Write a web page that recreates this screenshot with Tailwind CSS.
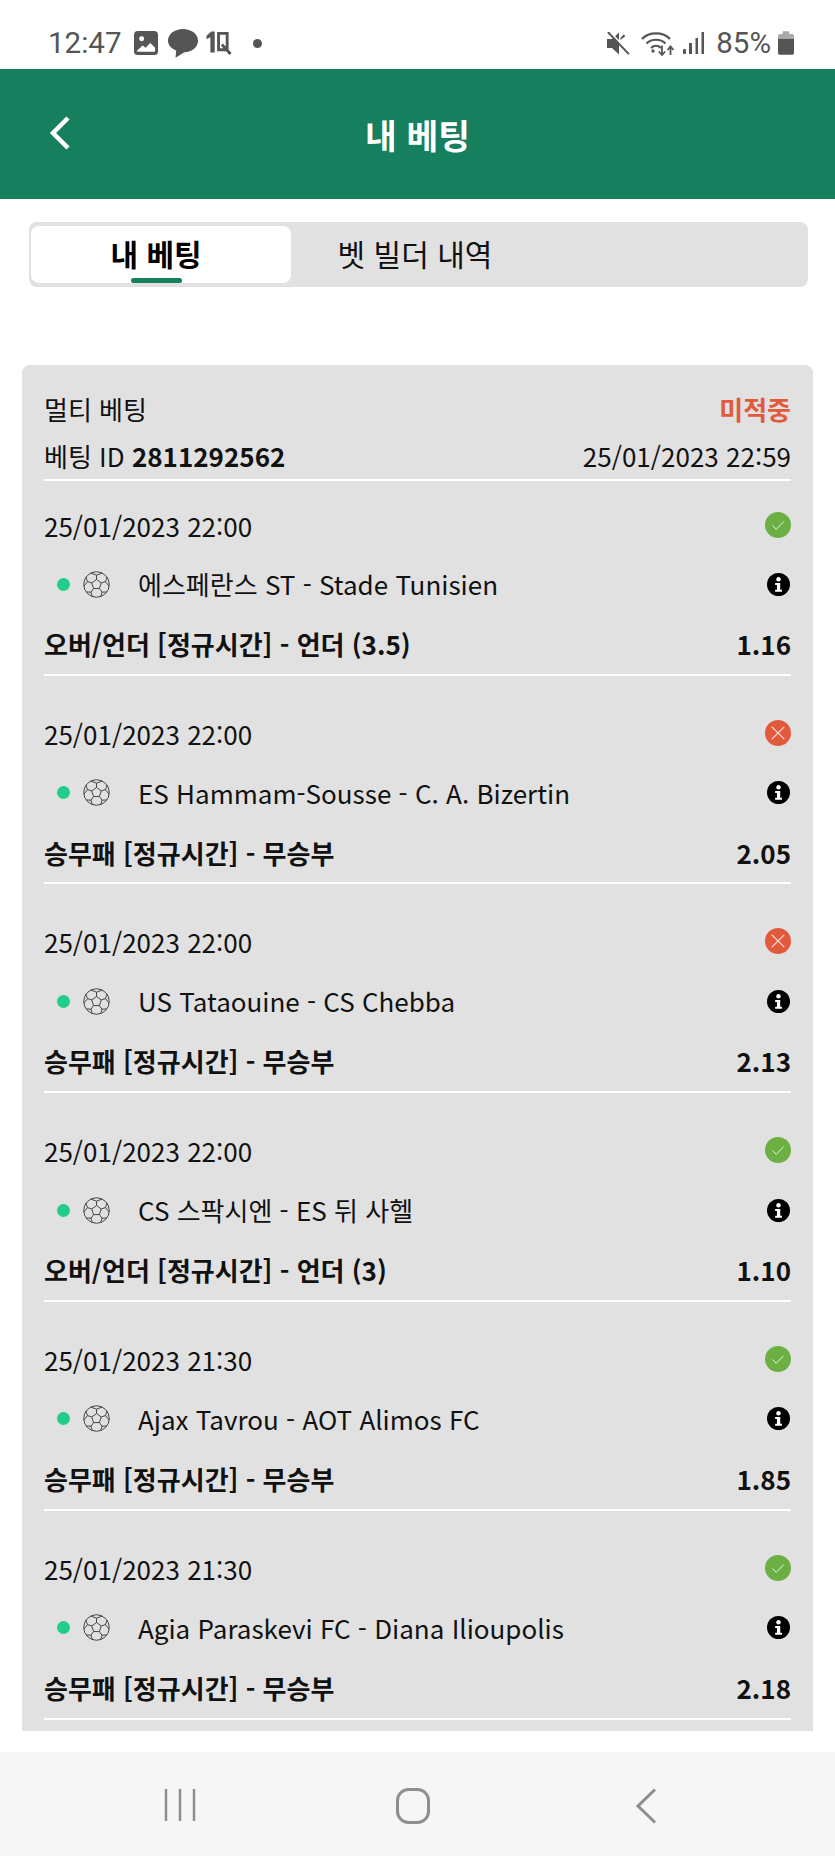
<!DOCTYPE html>
<html lang="ko">

<head>
    <meta charset="UTF-8">
    <meta name="viewport" content="width=device-width, initial-scale=1.0">
    <title>내 베팅</title>
    <script src="https://cdn.jsdelivr.net/npm/@tailwindcss/browser@4"></script>
</head>

<body class="bg-white font-['Noto_Sans_CJK_KR','Noto_Sans',sans-serif] text-[#111]">
    <svg class="hidden">
        <symbol id="ball" viewBox="0 0 26 26">
            <g fill="none" stroke="#3a3a3a" stroke-width="0.9">
                <circle cx="13" cy="13" r="12.300" />
                <path d="M13 8.200l4.600 3.300-1.800 5.400H10.200l-1.800-5.400z" />
                <path d="M13 8.200V4M17.600 11.500l4-1.300M15.800 16.900l2.500 3.500M10.200 16.900l-2.500 3.500M8.400 11.500l-4-1.300" />
                <path d="M7.500 2L13 4l5.500-2M21.600 10.200l1.800-4.400M21.600 10.200l3.500 4.300M18.300 20.400l4.500-.2M18.300 20.400l-1.300 4.400M7.700 20.400l-4.500-.2M7.700 20.400l1.300 4.400M4.400 10.200L2.600 5.800M4.400 10.200L.9 14.500" />
            </g>
        </symbol>
        <symbol id="info" viewBox="0 0 24 24">
            <circle cx="12" cy="12" r="12" fill="#000" />
            <circle cx="12" cy="6.600" r="2.300" fill="#fff" />
            <path fill="#fff" d="M8.500 10.400h5.300v7h1.800v2.200H8.500v-2.200h1.900v-4.800H8.500z" />
        </symbol>
        <symbol id="won" viewBox="0 0 26 26">
            <circle cx="13" cy="13" r="13" fill="#6cb044" />
            <path d="M7.500 13.500l3.800 3.800 7.500-7.800" fill="none" stroke="#e8f2e0" stroke-width="1" />
        </symbol>
        <symbol id="lost" viewBox="0 0 26 26">
            <circle cx="13" cy="13" r="13" fill="#e25a3c" />
            <path d="M6.800 6.800l12.400 12.400M19.200 6.800L6.800 19.200" fill="none" stroke="#fbe5df" stroke-width="1.100" />
        </symbol>
    </svg>

    <div class="flex h-[1856px] w-[835px] flex-col overflow-hidden">
        <!-- status bar -->
        <div class="flex h-[69px] shrink-0 items-start justify-between pl-[48px] pr-[41px] pt-[26px] font-['Roboto',sans-serif] text-[29.5px] leading-[34px] text-[#555]">
            <div class="flex items-center">
                <span>12:47</span>
                <svg class="ml-[13px] h-[24px] w-[24px]" viewBox="0 0 25 25">
                    <rect width="25" height="25" rx="4" fill="#555" />
                    <circle cx="8" cy="8" r="2.600" fill="#fff" />
                    <path fill="#fff" d="M3 20.500l6-5.500 3 2.500 5-5 5 5v3a1 1 0 0 1-1 1H4a1 1 0 0 1-1-1z" />
                </svg>
                <svg class="ml-[10px] h-[29px] w-[30px]" viewBox="0 0 30 29">
                    <path fill="#555" d="M15 0c8.300 0 15 5 15 11.700 0 6.400-6 11.300-13.600 11.600L7.500 28.800l.7-7.200C3.300 19.600 0 16 0 11.700 0 5 6.700 0 15 0z" />
                </svg>
                <svg class="ml-[8px] h-[24px] w-[27px]" viewBox="0 0 27 25">
                    <path fill="#555" d="M0 5l5-4.500h3.500v22H4V6.500L0 8.500z" />
                    <path fill="none" stroke="#555" stroke-width="3" d="M12.500 2.500h9v17h-9zM16 14l9 10" />
                </svg>
                <span class="ml-[20px] h-[9px] w-[9px] rounded-full bg-[#555]"></span>
            </div>
            <div class="flex items-center">
                <svg class="mr-[11px] h-[23px] w-[23px]" viewBox="0 0 23 23">
                    <path fill="#555" d="M0 7h5l7-6.500v22L5 16H0z" />
                    <path fill="#555" d="M13.500 6l3-3.500 2 1.500-5 4z" />
                    <path d="M1 0l21 22" stroke="#555" stroke-width="2.400" />
                    <path d="M3.200 0l20 21" stroke="#fff" stroke-width="1.500" />
                </svg>
                <svg class="mr-[8px] h-[25px] w-[34px]" viewBox="0 0 34 25">
                    <g fill="none" stroke="#555" stroke-width="2.200">
                        <path d="M1 8C8 .5 22 .5 29 8" />
                        <path d="M5.500 12.500c5-5 14-5 19 0" />
                        <path d="M10 17c3-2.800 7-2.800 10 0" />
                    </g>
                    <circle cx="12" cy="20" r="1.700" fill="#555" />
                    <path d="M21 14.500v9.500M17.800 20.500l3.200 3.500 3.200-3.500M29.500 24v-8M26.500 19l3-3.500 3 3.500" fill="none" stroke="#555" stroke-width="1.800" />
                </svg>
                <svg class="mr-[12px] h-[22px] w-[21px]" viewBox="0 0 21 22">
                    <rect x="0" y="17" width="3" height="5" rx="1" fill="#555" />
                    <rect x="6" y="11" width="3" height="11" fill="#555" />
                    <rect x="12.500" y="6" width="2.500" height="16" fill="#555" />
                    <rect x="18.500" y="0" width="2.500" height="22" fill="#555" />
                </svg>
                <span>85%</span>
                <svg class="ml-[7px] h-[24px] w-[16px]" viewBox="0 0 17 25">
                    <path fill="#aaa" d="M5 0h7v3h3a2 2 0 0 1 2 2v3H0V5a2 2 0 0 1 2-2h3z" />
                    <path fill="#555" d="M0 8h17v15a2 2 0 0 1-2 2H2a2 2 0 0 1-2-2z" />
                </svg>
            </div>
        </div>

        <!-- header -->
        <header class="relative flex h-[130px] shrink-0 items-center justify-center bg-[#167f5e]">
            <svg class="absolute left-[48px] top-[46px] h-[36px] w-[24px]" viewBox="0 0 24 36">
                <path d="M20 3L5 18l15 15" fill="none" stroke="#fff" stroke-width="4.500" />
            </svg>
            <h1 class="text-[34.500px] font-bold leading-[40px] text-white">내 베팅</h1>
        </header>

        <!-- tabs -->
        <div class="ml-[29px] mr-[27px] mt-[23px] flex h-[65px] shrink-0 rounded-lg bg-[#e1e1e1] p-[2px] pt-[4px]">
            <div class="relative flex h-[57px] w-[260px] items-center justify-center rounded-lg bg-white pb-[4px] pr-[10px] text-[30px] font-bold leading-[38px] text-black">
                내 베팅
                <span class="absolute bottom-0 left-[100px] h-[5px] w-[51px] rounded-sm bg-[#167f5e]"></span>
            </div>
            <div class="flex h-[57px] w-[248px] items-center justify-center pb-[4px] text-[30px] leading-[38px] text-[#111]">벳 빌더 내역</div>
        </div>

        <!-- bet card -->
        <section class="mx-[22px] mt-[78px] h-[1366px] shrink-0 overflow-hidden rounded-t-lg bg-[#e1e1e1] px-[22px] text-[26px]">
            <div class="flex h-[116px] flex-col border-b-2 border-white pt-[25px]">
                <div class="flex h-[38px] items-center justify-between leading-[38px]">
                    <span>멀티 베팅</span>
                    <span class="font-bold text-[#e25a3c]">미적중</span>
                </div>
                <div class="mt-[9px] flex h-[38px] items-center justify-between leading-[38px]">
                    <span>베팅 ID <b>2811292562</b></span>
                    <span>25/01/2023 22:59</span>
                </div>
            </div>

            <!-- 1 -->
            <div class="h-[194.600px] border-b-2 border-white">
                <div class="flex h-[62px] items-end justify-between">
                    <span class="leading-[34px]">25/01/2023 22:00</span>
                    <svg class="mb-[5px] h-[26px] w-[26px]"><use href="#won" /></svg>
                </div>
                <div class="mt-[24px] flex h-[34px] items-center">
                    <span class="ml-[13px] h-[13px] w-[13px] rounded-full bg-[#22cc8a]"></span>
                    <svg class="ml-[13px] h-[27px] w-[27px]"><use href="#ball" /></svg>
                    <span class="ml-[28px] grow leading-[34px]">에스페란스 ST - Stade Tunisien</span>
                    <svg class="mr-[1px] h-[23px] w-[23px]"><use href="#info" /></svg>
                </div>
                <div class="mt-[26px] flex h-[34px] items-center justify-between font-bold leading-[34px]">
                    <span>오버/언더 [정규시간] - 언더 (3.5)</span>
                    <span>1.16</span>
                </div>
            </div>

            <!-- 2 -->
            <div class="mt-[12px] h-[196.800px] border-b-2 border-white">
                <div class="flex h-[63px] items-end justify-between">
                    <span class="leading-[34px]">25/01/2023 22:00</span>
                    <svg class="mb-[5px] h-[26px] w-[26px]"><use href="#lost" /></svg>
                </div>
                <div class="mt-[25px] flex h-[34px] items-center">
                    <span class="ml-[13px] h-[13px] w-[13px] rounded-full bg-[#22cc8a]"></span>
                    <svg class="ml-[13px] h-[27px] w-[27px]"><use href="#ball" /></svg>
                    <span class="ml-[28px] grow leading-[34px]">ES Hammam-Sousse - C. A. Bizertin</span>
                    <svg class="mr-[1px] h-[23px] w-[23px]"><use href="#info" /></svg>
                </div>
                <div class="mt-[26px] flex h-[34px] items-center justify-between font-bold leading-[34px]">
                    <span>승무패 [정규시간] - 무승부</span>
                    <span>2.05</span>
                </div>
            </div>

            <!-- 3 -->
            <div class="mt-[12px] h-[196.800px] border-b-2 border-white">
                <div class="flex h-[63px] items-end justify-between">
                    <span class="leading-[34px]">25/01/2023 22:00</span>
                    <svg class="mb-[5px] h-[26px] w-[26px]"><use href="#lost" /></svg>
                </div>
                <div class="mt-[25px] flex h-[34px] items-center">
                    <span class="ml-[13px] h-[13px] w-[13px] rounded-full bg-[#22cc8a]"></span>
                    <svg class="ml-[13px] h-[27px] w-[27px]"><use href="#ball" /></svg>
                    <span class="ml-[28px] grow leading-[34px]">US Tataouine - CS Chebba</span>
                    <svg class="mr-[1px] h-[23px] w-[23px]"><use href="#info" /></svg>
                </div>
                <div class="mt-[26px] flex h-[34px] items-center justify-between font-bold leading-[34px]">
                    <span>승무패 [정규시간] - 무승부</span>
                    <span>2.13</span>
                </div>
            </div>

            <!-- 4 -->
            <div class="mt-[12px] h-[196.800px] border-b-2 border-white">
                <div class="flex h-[63px] items-end justify-between">
                    <span class="leading-[34px]">25/01/2023 22:00</span>
                    <svg class="mb-[5px] h-[26px] w-[26px]"><use href="#won" /></svg>
                </div>
                <div class="mt-[25px] flex h-[34px] items-center">
                    <span class="ml-[13px] h-[13px] w-[13px] rounded-full bg-[#22cc8a]"></span>
                    <svg class="ml-[13px] h-[27px] w-[27px]"><use href="#ball" /></svg>
                    <span class="ml-[28px] grow leading-[34px]">CS 스팍시엔 - ES 뒤 사헬</span>
                    <svg class="mr-[1px] h-[23px] w-[23px]"><use href="#info" /></svg>
                </div>
                <div class="mt-[26px] flex h-[34px] items-center justify-between font-bold leading-[34px]">
                    <span>오버/언더 [정규시간] - 언더 (3)</span>
                    <span>1.10</span>
                </div>
            </div>

            <!-- 5 -->
            <div class="mt-[12px] h-[196.800px] border-b-2 border-white">
                <div class="flex h-[63px] items-end justify-between">
                    <span class="leading-[34px]">25/01/2023 21:30</span>
                    <svg class="mb-[5px] h-[26px] w-[26px]"><use href="#won" /></svg>
                </div>
                <div class="mt-[25px] flex h-[34px] items-center">
                    <span class="ml-[13px] h-[13px] w-[13px] rounded-full bg-[#22cc8a]"></span>
                    <svg class="ml-[13px] h-[27px] w-[27px]"><use href="#ball" /></svg>
                    <span class="ml-[28px] grow leading-[34px]">Ajax Tavrou - AOT Alimos FC</span>
                    <svg class="mr-[1px] h-[23px] w-[23px]"><use href="#info" /></svg>
                </div>
                <div class="mt-[26px] flex h-[34px] items-center justify-between font-bold leading-[34px]">
                    <span>승무패 [정규시간] - 무승부</span>
                    <span>1.85</span>
                </div>
            </div>

            <!-- 6 -->
            <div class="mt-[12px] h-[196.800px] border-b-2 border-white">
                <div class="flex h-[63px] items-end justify-between">
                    <span class="leading-[34px]">25/01/2023 21:30</span>
                    <svg class="mb-[5px] h-[26px] w-[26px]"><use href="#won" /></svg>
                </div>
                <div class="mt-[25px] flex h-[34px] items-center">
                    <span class="ml-[13px] h-[13px] w-[13px] rounded-full bg-[#22cc8a]"></span>
                    <svg class="ml-[13px] h-[27px] w-[27px]"><use href="#ball" /></svg>
                    <span class="ml-[28px] grow leading-[34px]">Agia Paraskevi FC - Diana Ilioupolis</span>
                    <svg class="mr-[1px] h-[23px] w-[23px]"><use href="#info" /></svg>
                </div>
                <div class="mt-[26px] flex h-[34px] items-center justify-between font-bold leading-[34px]">
                    <span>승무패 [정규시간] - 무승부</span>
                    <span>2.18</span>
                </div>
            </div>
        </section>

        <!-- android nav -->
        <nav class="mt-[21px] flex h-[104px] shrink-0 items-start bg-[#f6f6f6] pt-[36px]">
            <svg class="ml-[164px] h-[34px] w-[32px]" viewBox="0 0 32 34">
                <path d="M2 1v32M16 1v32M30 1v32" stroke="#8e8e8e" stroke-width="2.500" />
            </svg>
            <svg class="ml-[200px] h-[36px] w-[34px]" viewBox="0 0 34 36">
                <rect x="1.500" y="1.500" width="31" height="33" rx="11" fill="none" stroke="#8e8e8e" stroke-width="3" />
            </svg>
            <svg class="ml-[205px] h-[36px] w-[22px]" viewBox="0 0 22 36">
                <path d="M20 1.500L3 18l17 16.500" fill="none" stroke="#8e8e8e" stroke-width="3" />
            </svg>
        </nav>
    </div>
</body>

</html>
